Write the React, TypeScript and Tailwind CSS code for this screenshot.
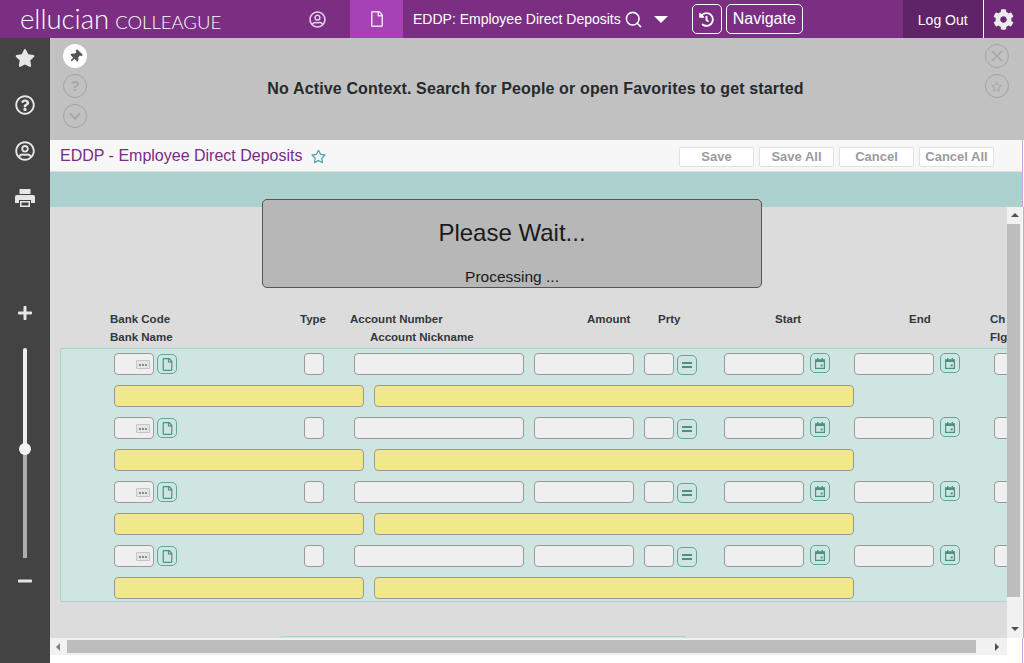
import { Search } from "lucide-react";
import {
  FaCog,
  FaHistory,
  FaMinus,
  FaPlus,
  FaRegFile,
  FaRegQuestionCircle,
  FaRegStar,
  FaRegUserCircle,
  FaStar,
  FaThumbtack,
} from "react-icons/fa";

const sans = { fontFamily: '"Liberation Sans", Arial, sans-serif' };

function Field({ w, yellow }: { w: string; yellow?: boolean }) {
  return (
    <div
      className={`h-[22px] shrink-0 rounded-[4px] border border-[#9a9a9a] ${w} ${yellow ? "bg-[#f1e78d]" : "bg-[#efefef]"}`}
    />
  );
}

function SquareBtn({ children, className = "" }: { children: React.ReactNode; className?: string }) {
  return (
    <div
      className={`flex h-5 w-5 shrink-0 items-center justify-center rounded-[5px] border border-[#5fa79b] bg-[#cfe5e1] text-[#4f8f85] ${className}`}
    >
      {children}
    </div>
  );
}

function CalendarIcon() {
  return (
    <svg width="10" height="11" viewBox="0 0 10 11" fill="#4f8f85">
      <rect x="2" y="0" width="1.4" height="2" />
      <rect x="6.6" y="0" width="1.4" height="2" />
      <path d="M0 1.2h10V11H0zM1.2 4v5.8h7.6V4z" />
      <rect x="5.6" y="6.4" width="2" height="2" />
    </svg>
  );
}

function PrinterIcon() {
  return (
    <svg width="20" height="18" viewBox="0 0 20 18" fill="currentColor" className="mt-[28px]">
      <path d="M4.5 0h11v5h-11z" />
      <path d="M2 6h16a2 2 0 0 1 2 2v6h-4v-3H4v3H0V8a2 2 0 0 1 2-2z" />
      <path d="M5 12h10v6H5zM6.5 13.5v3h7v-3z" fillRule="evenodd" />
    </svg>
  );
}

function Record() {
  return (
    <div className="flex flex-col gap-[10px]">
      <div className="flex items-start pl-[53px]">
        <div className="relative h-[22px] w-10 shrink-0 rounded-[4px] border border-[#9a9a9a] bg-[#efefef]">
          <div className="absolute top-[6px] left-[21px] flex h-[9px] w-[14px] items-center justify-center gap-[1px] rounded-[1px] border border-[#c4c4c4] bg-[#e4e4e4]">
            <span className="h-[2px] w-[2px] bg-[#8a8a8a]" />
            <span className="h-[2px] w-[2px] bg-[#8a8a8a]" />
            <span className="h-[2px] w-[2px] bg-[#8a8a8a]" />
          </div>
        </div>
        <SquareBtn className="mt-[1px] ml-[3px]">
          <FaRegFile size={13} />
        </SquareBtn>
        <div className="ml-[127px]">
          <Field w="w-5" />
        </div>
        <div className="ml-[30px]">
          <Field w="w-[170px]" />
        </div>
        <div className="ml-[10px]">
          <Field w="w-[100px]" />
        </div>
        <div className="ml-[10px]">
          <Field w="w-[30px]" />
        </div>
        <SquareBtn className="mt-[2px] ml-[3px] bg-[#bfdcd7]">
          <div className="flex flex-col gap-[2px]">
            <span className="block h-[2px] w-[10px] bg-[#4f8f85]" />
            <span className="block h-[2px] w-[10px] bg-[#4f8f85]" />
          </div>
        </SquareBtn>
        <div className="ml-[27px]">
          <Field w="w-20" />
        </div>
        <SquareBtn className="ml-[6px]">
          <CalendarIcon />
        </SquareBtn>
        <div className="ml-6">
          <Field w="w-20" />
        </div>
        <SquareBtn className="ml-[6px]">
          <CalendarIcon />
        </SquareBtn>
        <div className="ml-[34px]">
          <Field w="w-5" />
        </div>
      </div>
      <div className="flex gap-[10px] pl-[53px]">
        <Field w="w-[250px]" yellow />
        <Field w="w-[480px]" yellow />
      </div>
    </div>
  );
}

function GhostCircle({ children, className = "" }: { children: React.ReactNode; className?: string }) {
  return (
    <div
      className={`flex h-6 w-6 items-center justify-center rounded-full border border-[#a3a3a3] text-[#a6a6a6] ${className}`}
    >
      {children}
    </div>
  );
}

function ActionBtn({ label, w }: { label: string; w: string }) {
  return (
    <div
      className={`flex h-5 ${w} items-center justify-center rounded-[2px] border border-[#e2e2e2] bg-white text-[13px] font-bold text-[#9b9b9b]`}
    >
      {label}
    </div>
  );
}

export default function App() {
  return (
    <div style={sans} className="flex h-[663px] w-[1024px] flex-col overflow-hidden bg-white">
      <header className="flex h-[38px] shrink-0 items-center bg-[#7a2f83] text-white">
        <div className="flex w-[300px] items-baseline pl-5">
          <span className="text-[27.5px] leading-[38px] font-light" style={{ fontFamily: "Lato, sans-serif" }}>
            ellucian
          </span>
          <span className="ml-[6px] text-[18.5px] font-light" style={{ fontFamily: "Lato, sans-serif" }}>
            COLLEAGUE
          </span>
        </div>
        <div className="flex w-[50px] justify-start text-[#e6cfe9]">
          <FaRegUserCircle size={17} className="ml-[9px]" />
        </div>
        <div className="flex h-full w-[53px] items-center justify-center bg-[#a742b5] text-[#f0dcf3]">
          <FaRegFile size={16} />
        </div>
        <span className="ml-[10px] text-[14px]">EDDP: Employee Direct Deposits</span>
        <Search size={19} strokeWidth={2} className="ml-[3px] shrink-0" />
        <div className="ml-[11px] h-0 w-0 border-x-[7px] border-t-[7px] border-x-transparent border-t-white" />
        <div className="ml-6 flex h-[30px] w-[30px] items-center justify-center rounded-[5px] border border-white">
          <FaHistory size={15} />
        </div>
        <div className="ml-1 flex h-[30px] w-[77px] items-center justify-center rounded-[5px] border border-white text-[16px]">
          Navigate
        </div>
        <div className="ml-[100px] flex h-full w-20 items-center justify-center bg-[#5f2467] pt-[2px] text-[14px]">Log Out</div>
        <div className="flex h-full flex-1 items-center justify-center border-l border-white bg-[#6c2875] text-[#ececec]">
          <FaCog size={21} />
        </div>
      </header>

      <div className="flex min-h-0 flex-1">
        <aside className="flex w-[50px] shrink-0 flex-col items-center bg-[#434343] text-[#e6e6e6]">
          <FaStar size={20} className="mt-[10px]" />
          <FaRegQuestionCircle size={20} className="mt-[27px]" />
          <FaRegUserCircle size={20} className="mt-[26px]" />
          <PrinterIcon />
          <FaPlus size={16} className="mt-[98px]" />
          <div className="relative mt-[27px] h-[210px] w-1 rounded-sm bg-[#eeeeee]">
            <div className="absolute inset-x-0 top-[106px] bottom-0 bg-[#adadad]" />
            <div className="absolute top-[95px] -left-1 h-3 w-3 rounded-full bg-[#f2f2f2]" />
          </div>
          <FaMinus size={16} className="mt-[15px]" />
        </aside>

        <main className="relative flex min-w-0 flex-1 flex-col">
          <section className="relative flex h-[102px] shrink-0 bg-[#c1c1c1]">
            <div className="flex w-[50px] shrink-0 flex-col items-center gap-1.5 pt-[6px]">
              <div className="flex h-6 w-6 items-center justify-center rounded-full bg-white text-[#555]">
                <FaThumbtack size={13} className="rotate-45" />
              </div>
              <GhostCircle>
                <span className="text-[15px] font-bold">?</span>
              </GhostCircle>
              <GhostCircle>
                <svg width="12" height="8" viewBox="0 0 12 8" fill="none" stroke="currentColor" strokeWidth="2">
                  <path d="M1 1.5l5 5 5-5" />
                </svg>
              </GhostCircle>
            </div>
            <div className="flex-1 pt-[42px] pr-[3px] text-center text-[16px] leading-[18px] font-bold tracking-[0.14px] text-[#252a2e]">
              No Active Context. Search for People or open Favorites to get started
            </div>
            <div className="flex w-[50px] shrink-0 flex-col items-center gap-1.5 pt-[6px] pr-[5px]">
              <GhostCircle>
                <svg width="12" height="12" viewBox="0 0 12 12" fill="none" stroke="currentColor" strokeWidth="1.5">
                  <path d="M1 1l10 10M11 1L1 11" />
                </svg>
              </GhostCircle>
              <GhostCircle>
                <FaRegStar size={11} />
              </GhostCircle>
            </div>
          </section>

          <div className="mr-[1px] flex h-[32px] shrink-0 items-center border-r border-b border-r-[#cf9fdc] border-b-[#dcdcdc] bg-[#f7f7f7] pr-[28px] pl-[10px]">
            <span className="mt-[1px] text-[16px] text-[#7c2a87]">EDDP - Employee Direct Deposits</span>
            <FaRegStar size={15} className="mt-[1px] ml-[9px] text-[#4fa6a6]" />
            <div className="mt-[2px] ml-auto flex gap-[5px]">
              <ActionBtn label="Save" w="w-[75px]" />
              <ActionBtn label="Save All" w="w-[75px]" />
              <ActionBtn label="Cancel" w="w-[75px]" />
              <ActionBtn label="Cancel All" w="w-[75px]" />
            </div>
          </div>

          <div className="mr-[1px] h-[35px] shrink-0 border-r border-[#cf9fdc] bg-[#acd1ce]" />

          <div className="flex min-h-0 flex-1 flex-col">
            <div className="flex min-h-0 flex-1">
              <div className="min-w-0 flex-1 overflow-hidden bg-[#dcdcdc]">
                <div className="flex pt-[105px] pl-[60px] text-[11.5px] leading-[14px] font-bold text-[#33373a]">
                  <span className="w-[190px] shrink-0">Bank Code</span>
                  <span className="w-[50px] shrink-0">Type</span>
                  <span className="w-[237px] shrink-0">Account Number</span>
                  <span className="w-[71px] shrink-0">Amount</span>
                  <span className="w-[117px] shrink-0">Prty</span>
                  <span className="w-[134px] shrink-0">Start</span>
                  <span className="w-[81px] shrink-0">End</span>
                  <span className="shrink-0">Ch</span>
                </div>
                <div className="flex pt-1 pl-[60px] text-[11.5px] leading-[14px] font-bold text-[#33373a]">
                  <span className="w-[260px] shrink-0">Bank Name</span>
                  <span className="w-[620px] shrink-0">Account Nickname</span>
                  <span className="shrink-0">Flg</span>
                </div>
                <div className="mt-1 ml-[10px] flex w-[1000px] flex-col gap-[10px] rounded-[2px] border border-[#a9d3cc] bg-[#cfe5e1] pt-1 pb-[2px]">
                  <Record />
                  <Record />
                  <Record />
                  <Record />
                </div>
                <div className="mt-[34px] ml-[230px] h-2 w-[406px] rounded-t-[2px] border border-[#a9d3cc] bg-[#cfe5e1]" />
              </div>

              <div className="flex w-[15px] shrink-0 flex-col items-center bg-[#f1f1f1]">
                <div className="mt-[6px] h-0 w-0 border-x-[4px] border-b-[4px] border-x-transparent border-b-[#505050]" />
                <div className="mt-[7px] mr-[2px] h-[373px] w-[13px] bg-[#bdbdbd]" />
                <div className="mt-[30px] h-0 w-0 border-x-[4px] border-t-[4px] border-x-transparent border-t-[#505050]" />
              </div>
              <div className="w-[2px] shrink-0 bg-white">
                <div className="ml-[1px] h-full w-[1px] bg-[#cf9fdc]" />
              </div>
            </div>

            <div className="flex h-[25px] shrink-0">
              <div className="flex h-[17px] w-[957px] items-center bg-[#f1f1f1]">
                <div className="ml-[6px] h-0 w-0 border-y-[4px] border-r-[4px] border-y-transparent border-r-[#808080]" />
                <div className="ml-[7px] h-[13px] w-[909px] bg-[#bdbdbd]" />
                <div className="ml-[19px] h-0 w-0 border-y-[4px] border-l-[4px] border-y-transparent border-l-[#505050]" />
              </div>
              <div className="mr-[1px] ml-auto h-full w-[1px] bg-[#cf9fdc]" />
            </div>
          </div>

          <div className="absolute top-[161px] left-[212px] flex h-[89px] w-[500px] flex-col items-center rounded-[5px] border border-[#555] bg-[#b7b7b7] text-[#1a1a1a]">
            <span className="mt-[19px] text-[24px] leading-[28px]">Please Wait...</span>
            <span className="mt-[22px] text-[15.5px] leading-[16px]">Processing ...</span>
          </div>
        </main>
      </div>
    </div>
  );
}
